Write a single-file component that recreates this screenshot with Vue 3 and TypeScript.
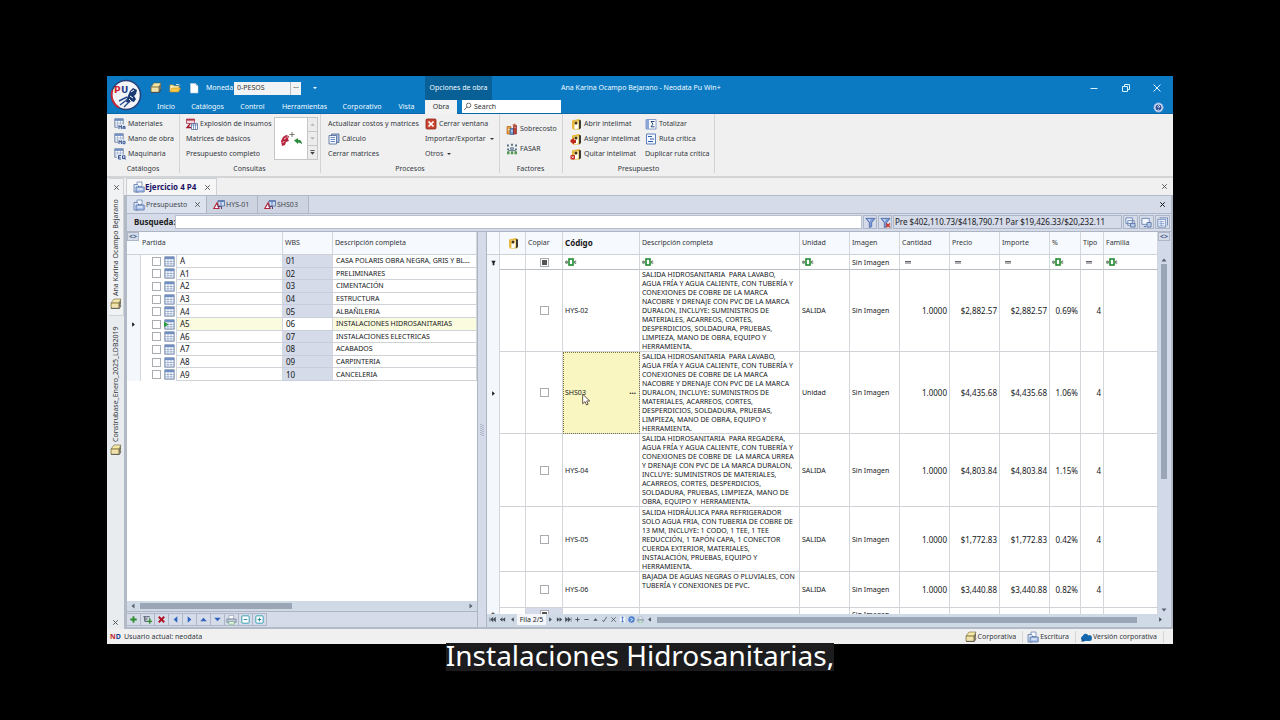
<script setup lang="ts">
import { ref } from 'vue'

interface Action { label: string; icon?: string; caret?: boolean }
interface Partida { code: string; wbs: string; name: string; current?: boolean }
interface Concepto {
  code: string; desc: string; unit: string; price: string; pct: string; size: string; current?: boolean
}

const menu = ['Inicio', 'Catálogos', 'Control', 'Herramientas', 'Corporativo', 'Vista']
const catalogos: Action[] = [
  { label: 'Materiales', icon: 'grid-ma' },
  { label: 'Mano de obra', icon: 'grid-mo' },
  { label: 'Maquinaria', icon: 'grid-eq' },
]
const consultas: Action[] = [
  { label: 'Explosión de insumos', icon: 'explode' },
  { label: 'Matrices de básicos' },
  { label: 'Presupuesto completo' },
]
const procesosA: Action[] = [
  { label: 'Actualizar costos y matrices' },
  { label: 'Cálculo', icon: 'calc' },
  { label: 'Cerrar matrices' },
]
const procesosB: Action[] = [
  { label: 'Cerrar ventana', icon: 'close-red' },
  { label: 'Importar/Exportar', caret: true },
  { label: 'Otros', caret: true },
]
const factores: Action[] = [
  { label: 'Sobrecosto', icon: 'factor' },
  { label: 'FASAR', icon: 'fasar' },
]
const presupuestoA: Action[] = [
  { label: 'Abrir intelimat', icon: 'mat-open' },
  { label: 'Asignar intelimat', icon: 'mat-assign' },
  { label: 'Quitar intelimat', icon: 'mat-remove' },
]
const presupuestoB: Action[] = [
  { label: 'Totalizar', icon: 'total' },
  { label: 'Ruta crítica', icon: 'route' },
  { label: 'Duplicar ruta crítica' },
]

const partidas: Partida[] = [
  { code: 'A', wbs: '01', name: 'CASA POLARIS OBRA NEGRA, GRIS Y BL…' },
  { code: 'A1', wbs: '02', name: 'PRELIMINARES' },
  { code: 'A2', wbs: '03', name: 'CIMENTACIÓN' },
  { code: 'A3', wbs: '04', name: 'ESTRUCTURA' },
  { code: 'A4', wbs: '05', name: 'ALBAÑILERIA' },
  { code: 'A5', wbs: '06', name: 'INSTALACIONES HIDROSANITARIAS', current: true },
  { code: 'A6', wbs: '07', name: 'INSTALACIONES ELECTRICAS' },
  { code: 'A7', wbs: '08', name: 'ACABADOS' },
  { code: 'A8', wbs: '09', name: 'CARPINTERIA' },
  { code: 'A9', wbs: '10', name: 'CANCELERIA' },
]

const lavabo = `SALIDA HIDROSANITARIA  PARA LAVABO,
AGUA FRÍA Y AGUA CALIENTE, CON TUBERÍA Y
CONEXIONES DE COBRE DE LA MARCA
NACOBRE Y DRENAJE CON PVC DE LA MARCA
DURALON, INCLUYE: SUMINISTROS DE
MATERIALES, ACARREOS, CORTES,
DESPERDICIOS, SOLDADURA, PRUEBAS,
LIMPIEZA, MANO DE OBRA, EQUIPO Y
HERRAMIENTA.`

const conceptos: Concepto[] = [
  { code: 'HYS-02', desc: lavabo, unit: 'SALIDA', price: '$2,882.57', pct: '0.69%', size: 'r82' },
  { code: 'SHS03', desc: lavabo, unit: 'Unidad', price: '$4,435.68', pct: '1.06%', size: 'r82', current: true },
  {
    code: 'HYS-04',
    desc: `SALIDA HIDROSANITARIA  PARA REGADERA,
AGUA FRÍA Y AGUA CALIENTE, CON TUBERÍA Y
CONEXIONES DE COBRE DE  LA MARCA URREA
Y DRENAJE CON PVC DE LA MARCA DURALON,
INCLUYE: SUMINISTROS DE MATERIALES,
ACARREOS, CORTES, DESPERDICIOS,
SOLDADURA, PRUEBAS, LIMPIEZA, MANO DE
OBRA, EQUIPO Y  HERRAMIENTA.`,
    unit: 'SALIDA', price: '$4,803.84', pct: '1.15%', size: 'r73',
  },
  {
    code: 'HYS-05',
    desc: `SALIDA HIDRÁULICA PARA REFRIGERADOR
SOLO AGUA FRIA, CON TUBERIA DE COBRE DE
13 MM, INCLUYE: 1 CODO, 1 TEE, 1 TEE
REDUCCIÓN, 1 TAPÓN CAPA, 1 CONECTOR
CUERDA EXTERIOR, MATERIALES,
INSTALACIÓN, PRUEBAS, EQUIPO Y
HERRAMIENTA.`,
    unit: 'SALIDA', price: '$1,772.83', pct: '0.42%', size: 'r65',
  },
  {
    code: 'HYS-06',
    desc: `BAJADA DE AGUAS NEGRAS O PLUVIALES, CON
TUBERÍA Y CONEXIONES DE PVC.`,
    unit: 'SALIDA', price: '$3,440.88', pct: '0.82%', size: 'r36',
  },
]

const treeTools = ['plus', 'plus-tree', 'delete', 'left', 'right', 'up', 'down', 'print', 'minus-box', 'plus-box']
const navBefore = ['nav-first', 'nav-back', 'mini-left']
const navAfter = ['mini-right', 'nav-fwd', 'nav-last', 'nav-add', 'nav-sub', 'mini-up', 'nav-ok', 'nav-no', 'nav-fit', 'nav-help', 'print', 'mini-left']
const search = ref('')
const busqueda = ref('')
const moneda = ref('0-PESOS')
</script>

<template>
  <svg class="defs" aria-hidden="true">
    <symbol id="box" viewBox="0 0 12 12">
      <path d="M1 5 4 1h7L9 5z" fill="#f6e9a8" stroke="#6d6340" stroke-width=".6" />
      <path d="M1 5h8v5H1z" fill="#e6cf7a" stroke="#6d6340" stroke-width=".6" />
      <path d="M9 5l2-4v5L9 10z" fill="#77725f" />
      <path d="M2 7h6M2 9h6" stroke="#fff" stroke-width=".8" />
      <path d="M1 10.500h8.500L11 7" fill="none" stroke="#4d4a3e" stroke-width=".8" />
    </symbol>
    <symbol id="folder" viewBox="0 0 12 12">
      <path d="M1 10V3h3l1 1h5v2" fill="#fff4c2" stroke="#d99b1c" stroke-width=".7" />
      <path d="M1 10 3 6h8.500L9.500 10z" fill="#f8c94c" stroke="#c88d14" stroke-width=".6" />
      <path d="M7 2.500h3l1 1" fill="none" stroke="#fff" stroke-width=".7" />
    </symbol>
    <symbol id="page" viewBox="0 0 12 12">
      <path d="M2.500 1.500h5l2.500 2.500v7h-7.500z" fill="#fff" stroke="#c5d2de" stroke-width=".5" />
      <path d="M7.500 1.500V4H10" fill="#b9c9d8" />
    </symbol>
    <symbol id="grid" viewBox="0 0 12 12">
      <rect x="1" y="1" width="10" height="10" fill="#fff" stroke="#5d7399" stroke-width="1" />
      <path d="M1 1h10v2.500H1z" fill="#6f8fc4" />
      <path d="M1 6h10M1 8.500h10M4.300 3v8M7.700 3v8" stroke="#8fa5cb" stroke-width=".8" />
    </symbol>
    <symbol id="grid-ma" viewBox="0 0 12 12">
      <use href="#grid" width="10" height="10" />
      <path d="M4 6.500h8V12H4z" fill="#e8ecf4" /><path d="M5 11V7.500l1.200 1.700 1.200-1.700V11M9 11V8.500h2V11M9 10h2" fill="none" stroke="#2b4a86" stroke-width=".9" />
    </symbol>
    <symbol id="grid-mo" viewBox="0 0 12 12">
      <use href="#grid" width="10" height="10" />
      <path d="M4 6.500h8V12H4z" fill="#e8ecf4" /><path d="M5 11V7.500l1.200 1.700 1.200-1.700V11M9 8.300h2v2.400H9z" fill="none" stroke="#2b4a86" stroke-width=".9" />
    </symbol>
    <symbol id="grid-eq" viewBox="0 0 12 12">
      <use href="#grid" width="10" height="10" />
      <path d="M3 6.500h9V12H3z" fill="#e8ecf4" /><path d="M7 7.500H4.500V11H7M4.500 9.200h2M8.500 7.800h2.500v2.800H8.500zM10 9.500l1.500 2" fill="none" stroke="#2b4a86" stroke-width=".9" />
    </symbol>
    <symbol id="explode" viewBox="0 0 12 12">
      <path d="M.5 1h8v4.500h-8z" fill="#f3d5dc" stroke="#b03a50" stroke-width=".8" />
      <path d="M.5 1.800h8M4 6 1 9.500h4" stroke="#a3142e" stroke-width="1.300" fill="none" />
      <path d="M5.500 5.500h6v6h-6z" fill="#fff" stroke="#53699a" stroke-width=".8" />
      <path d="M5.500 7h6M7.500 6v5M9.500 6v5" stroke="#6d86b8" stroke-width=".8" />
    </symbol>
    <symbol id="calc" viewBox="0 0 12 12">
      <path d="M3.500 1H11v8.500H3.500z" fill="#a8bbdc" stroke="#4c6594" stroke-width=".8" />
      <path d="M1 2.500h7.500V11H1z" fill="#f5f8fd" stroke="#4c6594" stroke-width=".8" />
      <path d="M2.500 4.500h4.500M2.500 6.500h4.500M2.500 8.500h4.500" stroke="#5b7cc0" stroke-width=".9" />
    </symbol>
    <symbol id="close-red" viewBox="0 0 12 12">
      <rect x="1" y="1" width="10" height="10" rx="1" fill="#c9452f" stroke="#8a2414" stroke-width=".8" />
      <path d="M3.500 3.500l5 5M8.500 3.500l-5 5" stroke="#fff" stroke-width="1.700" />
    </symbol>
    <symbol id="factor" viewBox="0 0 12 12">
      <path d="M1 3.500h4V11H1z" fill="#e8a13c" stroke="#a4541e" stroke-width=".6" />
      <path d="M4 5.500h4V11.500H4z" fill="#6b97d2" stroke="#34558c" stroke-width=".6" />
      <path d="M7.500 2.500h3V11h-3z" fill="#b7443a" stroke="#7a201c" stroke-width=".6" />
      <path d="M2 6.500h1.500M5 8h2M8.500 4.500h1" stroke="#fff" stroke-width=".8" />
      <path d="M6 2l3-1.500L10.500 3" fill="#c95a3a" />
    </symbol>
    <symbol id="fasar" viewBox="0 0 12 12">
      <path d="M1 1.500h2v2H1zM5 .8h2v2H5zM9 1.500h2v2H9zM1 5.500h2v1.500H1zM9 5.500h2v1.500H9z" fill="#5e7387" />
      <path d="M4 4h4v3H4z" fill="#8ba0ae" />
      <path d="M1 8.200h2.500v3H1zM4.800 8.200h2.500v3H4.800zM8.500 8.200H11v3H8.500z" fill="#4e9a55" />
      <path d="M2 7.500h8" stroke="#44566a" stroke-width=".7" />
    </symbol>
    <symbol id="mat-open" viewBox="0 0 12 12">
      <path d="M2 2.500 9 1l2 1.500V10L9 11.500H3L2 10z" fill="#e6b93a" />
      <path d="M4.500 3.500h4v7h-4z" fill="#fff8dc" /><circle cx="6" cy="5" r="1.500" fill="#463712" />
      <path d="M9 2v9.500L11 10V2.500z" fill="#3f3a30" /><path d="M5 7h3l-1 4H4.500z" fill="#fff" />
    </symbol>
    <symbol id="mat-assign" viewBox="0 0 12 12">
      <use href="#mat-open" /><path d="M.5 7 4 5v2h2v3H4v1.500L.5 9z" fill="#c2281e" />
    </symbol>
    <symbol id="mat-remove" viewBox="0 0 12 12">
      <use href="#mat-open" /><rect x=".5" y="7" width="4.500" height="4.500" rx="1" fill="#c2281e" /><path d="M1.700 8.200l2 2M3.700 8.200l-2 2" stroke="#fff" stroke-width=".8" />
    </symbol>
    <symbol id="total" viewBox="0 0 12 12">
      <path d="M1 1.500h10v9.500H1z" fill="#fff" stroke="#6a86bb" stroke-width=".8" />
      <path d="M1 1.500h3V11H1z" fill="#8aa6d8" /><path d="M9.500 3.500H6l2 2.700-2 2.600h3.500" fill="none" stroke="#28477f" stroke-width="1" />
    </symbol>
    <symbol id="route" viewBox="0 0 12 12">
      <path d="M1.500 1h9v10h-9z" fill="#f3f7fe" stroke="#5f80bd" stroke-width="1" />
      <path d="M3 3.500h4M5 6h4M3 8.500h5" stroke="#2f5caf" stroke-width="1" />
    </symbol>
    <symbol id="sheets" viewBox="0 0 12 12">
      <path d="M4 1h5v4.500H4z" fill="#f7fafd" stroke="#6c86b4" stroke-width=".8" />
      <path d="M1 3.500h4.500V11H1z" fill="#dce6f4" stroke="#5a76a9" stroke-width=".8" />
      <path d="M3 6h8.200v5H3z" fill="#a9c0e8" stroke="#4b689f" stroke-width=".7" />
      <path d="M4.500 8h5M5.500 2.500v2" stroke="#fff" stroke-width="1" />
    </symbol>
    <symbol id="matrix" viewBox="0 0 12 12">
      <path d="M5 1.500h6.500V7H5z" fill="#cfdcf2" stroke="#4d699f" stroke-width=".8" />
      <path d="M5 2.500h6.500M8 2v5" stroke="#6683b9" stroke-width="1" />
      <path d="M.8 9.500 4 4l2 5.500z" fill="#fff" stroke="#b3263e" stroke-width="1.200" /><path d="M4.500 7.500h4v2.500" stroke="#57437b" fill="none" stroke-width="1" />
    </symbol>
    <symbol id="grid-go" viewBox="0 0 12 12">
      <use href="#grid" /><path d="M0 3l5 3-5 3z" fill="#2d9a3b" />
    </symbol>
    <symbol id="funnel" viewBox="0 0 12 12">
      <path d="M1 1.500h10L7.300 6v4.500L4.700 11.500V6z" fill="#7f9edb" stroke="#3b5c9e" stroke-width=".8" /><path d="M3 2.500h3L5.500 5z" fill="#dbe6fa" />
    </symbol>
    <symbol id="funnel-x" viewBox="0 0 12 12">
      <use href="#funnel" /><path d="M6.500 7l4.500 4.300M11 7l-4.500 4.300" stroke="#cc3325" stroke-width="1.500" />
    </symbol>
    <symbol id="win-a" viewBox="0 0 12 12">
      <path d="M1 1h7v6H1zM3 4h7v5H3z" fill="#f4f8fd" stroke="#5c79ae" stroke-width=".9" /><path d="M6 7h5v4H6z" fill="#b6caea" stroke="#47659b" stroke-width=".8" />
    </symbol>
    <symbol id="win-b" viewBox="0 0 12 12">
      <path d="M1 1.500h8V8H1z" fill="#f4f8fd" stroke="#5c79ae" stroke-width=".9" /><path d="M6.500 6h4.500v5H6.500z" fill="#b6caea" stroke="#47659b" stroke-width=".8" /><path d="M3 10.500h2.500" stroke="#47659b" />
    </symbol>
    <symbol id="win-c" viewBox="0 0 12 12">
      <path d="M3 1h8.500v8M1 2.500h8.500V11H1z" fill="#f4f8fd" stroke="#5c79ae" stroke-width=".9" /><path d="M2.500 5h5.500M2.500 7h5.500M2.500 9h5.500M4.500 4v6" stroke="#6f8cc2" stroke-width=".7" />
    </symbol>
    <symbol id="abc" viewBox="0 0 12 8">
      <rect x="4" y="1" width="4" height="6" fill="#fff" stroke="#1e8a2e" stroke-width="1.600" />
      <path d="M.8 3.200h1.500v2H.8zM11.200 3.200H9.700v2h1.500" fill="none" stroke="#3c5c40" stroke-width=".9" />
    </symbol>
    <symbol id="equal" viewBox="0 0 12 8"><path d="M3 3.500h6M3 5h6" stroke="#50565e" stroke-width=".9" /></symbol>
    <symbol id="plus" viewBox="0 0 12 12"><path d="M6 2.500v7M2.500 6h7" stroke="#2e8b2e" stroke-width="2" /></symbol>
    <symbol id="plus-tree" viewBox="0 0 12 12"><path d="M1.500 3h7M3 3v5h3M3 5.500h3" fill="none" stroke="#3f4a5a" stroke-width="1" /><path d="M8.500 4.500v6M5.500 8h5.500" stroke="#2e8b2e" stroke-width="1.500" /></symbol>
    <symbol id="delete" viewBox="0 0 12 12"><path d="M3 3l6 6M9 3l-6 6" stroke="#b01020" stroke-width="2" /></symbol>
    <symbol id="left" viewBox="0 0 12 12"><path d="M8 2.500v7L4 6z" fill="#2d62c0" /></symbol>
    <symbol id="right" viewBox="0 0 12 12"><path d="M4 2.500v7L8 6z" fill="#2d62c0" /></symbol>
    <symbol id="up" viewBox="0 0 12 12"><path d="M2.500 8h7L6 4z" fill="#2d62c0" /></symbol>
    <symbol id="down" viewBox="0 0 12 12"><path d="M2.500 4h7L6 8z" fill="#2d62c0" /></symbol>
    <symbol id="print" viewBox="0 0 12 12"><path d="M3.500 1.500h5l-.5 4H3z" fill="#fff" stroke="#7d8ca4" stroke-width=".6" /><path d="M1 5.500h10v3.500H1z" fill="#c2ccdc" stroke="#5d6c86" stroke-width=".7" /><path d="M3 8.500h6V11H3z" fill="#fff" stroke="#49a34d" stroke-width=".6" /></symbol>
    <symbol id="minus-box" viewBox="0 0 12 12"><rect x="2" y="2" width="8" height="8" rx="1" fill="#fff" stroke="#2b98b0" /><path d="M4 6h4" stroke="#2b7c98" /></symbol>
    <symbol id="plus-box" viewBox="0 0 12 12"><rect x="2" y="2" width="8" height="8" rx="1" fill="#fff" stroke="#2b98b0" /><path d="M4 6h4M6 4v4" stroke="#2b7c98" /></symbol>
    <symbol id="cross" viewBox="0 0 12 12"><path d="M3 3l6 6M9 3l-6 6" stroke="currentColor" stroke-width="1.300" /></symbol>
    <symbol id="cloud" viewBox="0 0 12 12"><path d="M3 10a2.600 2.600 0 0 1-.3-5 3 3 0 0 1 5.600-.6A2.400 2.400 0 0 1 11.800 7 2.500 2.500 0 0 1 9.500 10z" fill="#1668ae" /><path d="M1 10.500 3 8l1.500 2.500z" fill="#0b4a86" /></symbol>
    <symbol id="mini-left" viewBox="0 0 8 8"><path d="M5.500 1.500v5L2.500 4z" fill="currentColor" /></symbol>
    <symbol id="mini-right" viewBox="0 0 8 8"><path d="M2.500 1.500v5l3-2.500z" fill="currentColor" /></symbol>
    <symbol id="mini-up" viewBox="0 0 8 8"><path d="M1.500 5.500h5L4 2.500z" fill="currentColor" /></symbol>
    <symbol id="mini-down" viewBox="0 0 8 8"><path d="M1.500 2.500h5L4 5.500z" fill="currentColor" /></symbol>
    <symbol id="nav-first" viewBox="0 0 8 8"><path d="M1 1.500v5M4.500 1.500v5L1.800 4zM7.500 1.500v5L4.800 4z" fill="currentColor" stroke="currentColor" stroke-width=".6" /></symbol>
    <symbol id="nav-back" viewBox="0 0 8 8"><path d="M4 1.500v5L1 4zM7 1.500v5L4 4z" fill="currentColor" /></symbol>
    <symbol id="nav-fwd" viewBox="0 0 8 8"><path d="M1 1.500v5L4 4zM4 1.500v5L7 4z" fill="currentColor" /></symbol>
    <symbol id="nav-last" viewBox="0 0 8 8"><path d="M7 1.500v5M3.500 1.500v5L6.200 4zM.5 1.500v5L3.200 4z" fill="currentColor" stroke="currentColor" stroke-width=".6" /></symbol>
    <symbol id="nav-add" viewBox="0 0 8 8"><path d="M4 1.500v5M1.500 4h5" stroke="currentColor" /></symbol>
    <symbol id="nav-sub" viewBox="0 0 8 8"><path d="M1.500 4h5" stroke="currentColor" /></symbol>
    <symbol id="nav-ok" viewBox="0 0 8 8"><path d="M1.500 4.500 3 6.500 6.500 1" fill="none" stroke="currentColor" stroke-width=".9" /></symbol>
    <symbol id="nav-no" viewBox="0 0 8 8"><path d="M1.500 1.500l5 5M6.500 1.500l-5 5" stroke="currentColor" stroke-width=".9" /></symbol>
    <symbol id="nav-fit" viewBox="0 0 8 8"><path d="M1 .5h6v7H1z" fill="#eef4fd" /><path d="M4 1v6M2.800 2.200 4 1l1.200 1.200M2.800 5.800 4 7l1.200-1.200" fill="none" stroke="#2f62b8" stroke-width=".9" /></symbol>
    <symbol id="nav-help" viewBox="0 0 8 8"><circle cx="4" cy="4" r="3.600" fill="#4a7fd0" /><path d="M2.500 2.500 5.500 4l-2.500 2" stroke="#fff" fill="none" stroke-width=".9" /></symbol>
  </svg>

  <div class="stage">
    <div class="window">
      <header class="titlebar">
        <svg class="logo" viewBox="0 0 32 32" aria-label="Neodata PU">
          <circle cx="16" cy="16" r="14.500" fill="#f2f4f7" stroke="#27407c" stroke-width="1.500" />
          <path d="M2.500 11A14.500 14.500 0 0 0 9 28.500" fill="none" stroke="#cc2b35" stroke-width="1.800" />
          <text x="4" y="14" class="logo-p">P</text>
          <text x="11" y="14" class="logo-u">U</text>
          <path d="M20 12l3-3 4 2-1 4-2 2 2 3-2 3-3-1-2 2-3-1 1-4z" fill="#1b3a73" />
          <path d="M21 13l3-2M20 17l3 2M19 20l2 2" stroke="#fff" stroke-width="1" />
          <path d="M17 18 9 22M18 20l-8 6M19 23l-5 5" stroke="#2b4b8c" stroke-width="1.400" />
        </svg>
        <div class="title-main">
          <div class="title-row">
            <div class="quick">
              <button aria-label="Obras"><svg><use href="#box" /></svg></button>
              <button aria-label="Abrir"><svg><use href="#folder" /></svg></button>
              <button aria-label="Nuevo"><svg><use href="#page" /></svg></button>
              <label for="moneda">Moneda</label>
              <span class="combo"><input id="moneda" v-model="moneda"><button aria-label="Elegir moneda">···</button></span>
              <button class="more" aria-label="Personalizar"><svg><use href="#mini-down" /></svg></button>
            </div>
            <div class="context">Opciones de obra</div>
            <h1>Ana Karina Ocampo Bejarano - Neodata Pu Win+</h1>
            <div class="winbtns">
              <button aria-label="Minimizar"><svg viewBox="0 0 12 12"><path d="M2.500 6.500h7" stroke="#d9f4ff" /></svg></button>
              <button aria-label="Restaurar"><svg viewBox="0 0 12 12"><path d="M2.500 4.500h5v5h-5zM4.500 4.500v-2h5v5h-2" fill="none" stroke="#d9f4ff" /></svg></button>
              <button aria-label="Cerrar"><svg viewBox="0 0 12 12"><path d="M2.500 2.500l7 7M9.500 2.500l-7 7" stroke="#d9f4ff" /></svg></button>
            </div>
          </div>
          <nav class="menu-row">
            <div class="menu"><button v-for="m in menu" :key="m">{{ m }}</button></div>
            <button class="active">Obra</button>
            <label class="search">
              <svg viewBox="0 0 12 12"><circle cx="7.500" cy="4.500" r="3" fill="none" stroke="#444" /><path d="M5.500 6.500 1.500 10.500" stroke="#444" /></svg>
              <input v-model="search" placeholder="Search" aria-label="Search">
            </label>
            <button class="help" aria-label="Ayuda"><svg viewBox="0 0 12 12"><circle cx="6" cy="6" r="5" fill="#dfe9fa" stroke="#8fb2e6" /><circle cx="6" cy="6" r="3.300" fill="#35549c" /><path d="M4.800 5q1.200-1.800 2.400-.4Q7 5.800 6 6.500M6 8v.6" stroke="#fff" fill="none" /></svg></button>
          </nav>
        </div>
      </header>

      <section class="ribbon">
        <div class="group g-cat">
          <div class="cols"><div class="col"><button v-for="a in catalogos" :key="a.label"><svg v-if="a.icon"><use :href="'#' + a.icon" /></svg>{{ a.label }}</button></div></div>
          <h2>Catálogos</h2>
        </div>
        <div class="group g-con">
          <div class="cols">
            <div class="col"><button v-for="a in consultas" :key="a.label"><svg v-if="a.icon"><use :href="'#' + a.icon" /></svg>{{ a.label }}</button></div>
            <div class="gallery">
              <button class="preview" aria-label="Consulta"><svg viewBox="0 0 24 16"><path d="M2 10l2-4 3-2 3 1-1 3 1 2-3 1-1 3-3 1z" fill="#b5243c" /><path d="M3.500 11.500l2-1M5 8l2-1M7.500 6h1.500" stroke="#fff" stroke-width=".8" /><path d="M13 1v5M10.500 3.500h5" stroke="#6c6660" stroke-width=".9" /><path d="M15 9.500l4-2.500v1.800q4 .2 4 4.700-1.200-2-4-2v1.500z" fill="#2d8b3c" /></svg></button>
              <div class="spin">
                <button disabled aria-label="Subir"><svg><use href="#mini-up" /></svg></button>
                <button disabled aria-label="Bajar"><svg><use href="#mini-down" /></svg></button>
                <button aria-label="Más"><svg viewBox="0 0 8 8"><path d="M1.500 1.800h5" stroke="#444" /><path d="M1.500 3.500h5L4 6.500z" fill="#444" /></svg></button>
              </div>
            </div>
          </div>
          <h2>Consultas</h2>
        </div>
        <div class="group g-pro">
          <div class="cols">
            <div class="col c-a"><button v-for="a in procesosA" :key="a.label"><svg v-if="a.icon"><use :href="'#' + a.icon" /></svg>{{ a.label }}</button></div>
            <div class="col"><button v-for="a in procesosB" :key="a.label"><svg v-if="a.icon"><use :href="'#' + a.icon" /></svg>{{ a.label }}<i v-if="a.caret" class="caret" /></button></div>
          </div>
          <h2>Procesos</h2>
        </div>
        <div class="group g-fac">
          <div class="cols"><div class="col tall"><button v-for="a in factores" :key="a.label"><svg v-if="a.icon"><use :href="'#' + a.icon" /></svg>{{ a.label }}</button></div></div>
          <h2>Factores</h2>
        </div>
        <div class="group g-pre">
          <div class="cols">
            <div class="col c-p"><button v-for="a in presupuestoA" :key="a.label"><svg v-if="a.icon"><use :href="'#' + a.icon" /></svg>{{ a.label }}</button></div>
            <div class="col"><button v-for="a in presupuestoB" :key="a.label"><svg v-if="a.icon"><use :href="'#' + a.icon" /></svg>{{ a.label }}</button></div>
          </div>
          <h2>Presupuesto</h2>
        </div>
      </section>

      <main class="work">
        <aside class="rail">
          <div class="rail-tab first">
            <button class="x" aria-label="Cerrar panel"><svg><use href="#cross" /></svg></button>
            <button class="vert">Ana Karina Ocampo Bejarano</button>
            <svg><use href="#box" /></svg>
          </div>
          <div class="rail-tab second">
            <button class="vert">Construbase_Enero_2025_LDB2019</button>
            <svg><use href="#box" /></svg>
          </div>
          <button class="x last" aria-label="Cerrar base"><svg><use href="#cross" /></svg></button>
        </aside>

        <div class="docs">
          <div class="doc-tabs">
            <div class="doc-tab"><svg><use href="#sheets" /></svg><button>Ejercicio 4 P4</button><button class="x" aria-label="Cerrar obra"><svg><use href="#cross" /></svg></button></div>
            <button class="x end" aria-label="Cerrar"><svg><use href="#cross" /></svg></button>
          </div>
          <div class="panel">
            <div class="sub-tabs">
              <div class="sub-tab on"><svg><use href="#sheets" /></svg><button>Presupuesto</button><button class="x" aria-label="Cerrar presupuesto"><svg><use href="#cross" /></svg></button></div>
              <div class="sub-tab"><svg><use href="#matrix" /></svg><button>HYS-01</button></div>
              <div class="sub-tab"><svg><use href="#matrix" /></svg><button>SHS03</button></div>
              <button class="x end dark" aria-label="Cerrar pestaña"><svg><use href="#cross" /></svg></button>
            </div>
            <div class="find">
              <label for="busqueda">Busqueda:</label>
              <input id="busqueda" v-model="busqueda">
              <button aria-label="Filtrar"><svg><use href="#funnel" /></svg></button>
              <button aria-label="Quitar filtro"><svg><use href="#funnel-x" /></svg></button>
              <output>Pre $402,110.73/$418,790.71 Par $19,426.33/$20,232.11</output>
              <button aria-label="Ventanas"><svg><use href="#win-a" /></svg></button>
              <button aria-label="Ventana"><svg><use href="#win-b" /></svg></button>
              <button aria-label="Lista"><svg><use href="#win-c" /></svg></button>
            </div>

            <div class="split">
              <section class="tree">
                <div class="tree-view">
                  <table>
                    <colgroup><col class="w14"><col class="w36"><col class="w106"><col class="w50"><col></colgroup>
                    <thead>
                      <tr><th class="corner"><button aria-label="Columnas">&lt;&gt;</button></th><th colspan="2" class="flush">Partida</th><th>WBS</th><th>Descripción completa</th></tr>
                    </thead>
                    <tbody>
                      <tr v-for="p in partidas" :key="p.code" :class="{ current: p.current }">
                        <td class="ind"><svg v-if="p.current"><use href="#mini-right" /></svg></td>
                        <td class="marks"><div><input type="checkbox" :aria-label="p.code"><svg><use :href="p.current ? '#grid-go' : '#grid'" /></svg></div></td>
                        <td class="cell fig">{{ p.code }}</td>
                        <td class="wbs fig">{{ p.wbs }}</td>
                        <td class="cell">{{ p.name }}</td>
                      </tr>
                    </tbody>
                  </table>
                </div>
                <div class="hscroll"><svg><use href="#mini-left" /></svg><div class="track"><i class="thumb" /></div><svg><use href="#mini-right" /></svg></div>
                <div class="tools"><button v-for="t in treeTools" :key="t" :aria-label="t"><svg><use :href="'#' + t" /></svg></button></div>
              </section>

              <div class="splitter">
                <svg viewBox="0 0 4 12"><path d="M1 0v12M3 1v11" stroke="#8b97aa" stroke-width="1" stroke-dasharray="1 1" /></svg>
              </div>

              <section class="items">
                <div class="items-body">
                  <div class="items-view">
                    <table>
                      <colgroup>
                        <col class="w13"><col class="w26"><col class="w37"><col class="w77"><col class="w160"><col class="w50"><col class="w50">
                        <col class="w50"><col class="w50"><col class="w50"><col class="w31"><col class="w23"><col>
                      </colgroup>
                      <thead>
                        <tr>
                          <th /><th class="mid"><svg><use href="#mat-open" /></svg></th><th>Copiar</th><th class="strong">Código</th><th>Descripción completa</th><th>Unidad</th>
                          <th>Imagen</th><th>Cantidad</th><th>Precio</th><th>Importe</th><th>%</th><th>Tipo</th><th>Familia</th>
                        </tr>
                      </thead>
                      <tbody>
                        <tr class="filter">
                          <td class="ind"><svg viewBox="0 0 8 8"><path d="M1.500 2h5L5 4.500V7H3V4.500z" fill="#222" /></svg></td><td />
                          <td class="mid"><input type="checkbox" class="mixed" aria-label="Filtrar copiar"></td>
                          <td><svg><use href="#abc" /></svg></td><td><svg><use href="#abc" /></svg></td><td><svg><use href="#abc" /></svg></td>
                          <td>Sin Imagen</td><td><svg><use href="#equal" /></svg></td><td><svg><use href="#equal" /></svg></td><td><svg><use href="#equal" /></svg></td>
                          <td><svg><use href="#abc" /></svg></td><td><svg><use href="#equal" /></svg></td><td><svg><use href="#abc" /></svg></td>
                        </tr>
                        <tr v-for="c in conceptos" :key="c.code" :class="c.size">
                          <td class="ind"><svg v-if="c.current"><use href="#mini-right" /></svg></td><td />
                          <td class="mid"><input type="checkbox" :aria-label="'Copiar ' + c.code"></td>
                          <td :class="{ focus: c.current }">
                            <div class="code"><span>{{ c.code }}</span><button v-if="c.current" aria-label="Editar código">···</button></div>
                            <svg v-if="c.current" class="cursor" viewBox="0 0 12 16"><path d="M2 1v11.500l2.800-2.500 1.800 4 2-1-1.800-3.800h3.700z" fill="#fff" stroke="#4a3a2c" /></svg>
                          </td>
                          <td class="desc">{{ c.desc }}</td><td>{{ c.unit }}</td><td>Sin Imagen</td>
                          <td class="num">1.0000</td><td class="num">{{ c.price }}</td><td class="num">{{ c.price }}</td><td class="num">{{ c.pct }}</td><td class="num">4</td><td />
                        </tr>
                        <tr class="new">
                          <td class="ind">*</td><td /><td class="mid shade"><input type="checkbox" class="mixed" aria-label="Copiar nuevo"></td><td /><td /><td /><td>Sin Imagen</td><td /><td /><td /><td /><td /><td />
                        </tr>
                      </tbody>
                    </table>
                  </div>
                  <div class="vscroll">
                    <button aria-label="Columnas">&lt;&gt;</button>
                    <svg><use href="#mini-up" /></svg><div class="vtrack"><i /></div><svg><use href="#mini-down" /></svg>
                  </div>
                </div>
                <div class="navigator">
                  <button v-for="n in navBefore" :key="n" :aria-label="n"><svg><use :href="'#' + n" /></svg></button>
                  <span>Fila 2/5</span>
                  <button v-for="n in navAfter" :key="n" class="narrow" :aria-label="n"><svg><use :href="'#' + n" /></svg></button>
                  <div class="track"><i /></div>
                  <button class="go" aria-label="Desplazar"><svg><use href="#mini-right" /></svg></button>
                </div>
              </section>
            </div>
          </div>
        </div>
      </main>

      <footer class="status">
        <b class="nd"><i>N</i>D</b><span class="user">Usuario actual: neodata</span>
        <span class="s"><svg><use href="#box" /></svg>Corporativa</span>
        <span class="s"><svg><use href="#sheets" /></svg>Escritura</span>
        <span class="s"><svg><use href="#cloud" /></svg>Versión corporativa</span>
      </footer>
    </div>
    <p class="caption"><span>Instalaciones Hidrosanitarias,</span></p>
  </div>
</template>

<style>
html, body { background: #000; }
</style>

<style scoped>
* { box-sizing: border-box; }
.defs { position: absolute; width: 0; height: 0; }
.stage { position: relative; height: 100vh; min-height: 720px; padding: 76px 107px; background: #000; font: 7px/12px "Noto Sans", Tahoma, sans-serif; color: #24282e; }
button { font: inherit; color: inherit; background: none; border: 0; padding: 0; margin: 0; display: inline-flex; align-items: center; justify-content: center; white-space: nowrap; }
input { font: inherit; color: inherit; border: 0; border-radius: 0; padding: 0; margin: 0; min-width: 0; outline: 0; }
h1, h2, p { margin: 0; font-size: inherit; font-weight: normal; }
svg { width: 12px; height: 12px; flex: none; display: block; }
.window { height: 100%; display: flex; flex-direction: column; background: #f0f0f0; overflow: hidden; }

.titlebar { display: flex; height: 38px; flex: none; background: #0b7ac3; color: #f2fbff; border-bottom: 1px solid #0a68a8; }
.logo { width: 32px; height: 32px; margin: 3px 7px 0 3px; }
.logo-p, .logo-u { font: bold 9px "DejaVu Sans", sans-serif; fill: #d0202c; }
.logo-u { fill: #1c3f86; }
.title-main { flex: 1; min-width: 0; }
.title-row { display: flex; height: 24px; align-items: stretch; }
.quick { width: 276px; display: flex; align-items: center; }
.quick > button { width: 19px; height: 12px; }
.quick > button:first-child { width: 13px; margin-right: 3px; }
.quick label { margin: 0 0 0 3px; width: 28px; white-space: nowrap; }
.combo { display: flex; height: 13px; width: 67px; background: #f1f3f4; color: #333; }
.combo input { flex: 1; background: none; padding-left: 3px; }
.combo button { width: 11px; border-left: 1px solid #b7bcc2; }
.quick .more { margin-left: 4px; }
.more svg { width: 6px; height: 6px; }
.context { width: 67px; display: flex; align-items: center; justify-content: center; background: #096096; white-space: nowrap; }
h1 { flex: 1; padding-left: 69px; align-self: center; white-space: nowrap; }
.winbtns { display: flex; width: 95px; }
.winbtns button { width: 32px; }
.menu-row { display: flex; height: 14px; }
.menu { display: grid; grid-template-columns: 34px 49px 41px 63px 52px 37px; }
.menu-row .active { width: 32px; background: #f3f3f3; color: #333; margin-right: 5px; }
.search { display: flex; align-items: center; width: 99px; height: 13px; background: #fff; color: #333; padding-left: 1px; }
.search svg { width: 9px; height: 9px; margin-right: 2px; }
.search input { width: 80px; background: none; }
.search input::placeholder { color: #333; opacity: 1; }
.help { margin-left: auto; margin-right: 9px; }
.help svg { width: 11px; height: 11px; }

.ribbon { display: flex; height: 64px; flex: none; background: #f0f0f0; border-bottom: 2px solid #d2d4d6; color: #34393f; }
.group { border-right: 1px solid #d4d4d4; padding: 3px 0 0 7px; margin-bottom: 3px; }
.group h2 { text-align: center; padding-right: 7px; line-height: 15px; }
.cols { display: flex; height: 44px; }
.col { display: flex; flex-direction: column; justify-content: space-between; }
.col button { height: 14px; justify-content: flex-start; }
.col svg { margin-right: 2px; }
.col.tall { justify-content: center; gap: 6px; }
.g-cat { width: 73px; } .g-con { width: 141px; padding-left: 6px; } .g-pro { width: 179px; } .g-fac { width: 63px; padding-left: 6px; } .g-pre { width: 152px; }
.g-con .col { width: 88px; }
.c-a { width: 97px; } .c-p { width: 75px; }
.caret { width: 0; height: 0; margin-left: 4px; border: 2px solid transparent; border-top-color: #333; border-bottom: 0; }
.gallery { display: flex; height: 43px; width: 44px; border: 1px solid #c4c6c8; }
.preview { flex: 1; background: #fff; }
.preview svg { width: 24px; height: 16px; }
.spin { width: 10px; display: flex; flex-direction: column; border-left: 1px solid #c4c6c8; background: #ececec; color: #777; }
.spin button { flex: 1; }
.spin button + button { border-top: 1px solid #c4c6c8; }
.spin button:disabled { color: #b2b5b8; }
.spin svg { width: 7px; height: 7px; }

.work { flex: 1; display: flex; min-height: 0; }
.rail { width: 17px; display: flex; flex-direction: column; background: #e8ecee; }
.rail-tab { display: flex; flex-direction: column; align-items: center; margin-left: 2px; border: 1px solid #d0d4d6; border-left: 0; background: #f1f2f3; }
.rail-tab.first { height: 138px; padding-top: 2px; }
.rail-tab.second { height: 141px; padding-top: 6px; background: none; border-color: transparent; }
.vert { writing-mode: vertical-rl; transform: rotate(180deg); width: 12px; justify-content: flex-start; color: #33383e; }
.first .vert { margin: 4px 0 2px; height: 98px; }
.second .vert { height: 119px; margin-bottom: 2px; }
.x { width: 13px; height: 13px; flex: none; color: #555; }
.x svg { width: 9px; height: 9px; }
.x.end { margin-left: auto; margin-right: 2px; }
.x.dark { color: #111; }
.x.last { margin-top: auto; margin-left: 2px; }

.docs { flex: 1; display: flex; flex-direction: column; min-width: 0; }
.doc-tabs { height: 17px; display: flex; align-items: center; background: #f0f0f0; }
.doc-tab { display: flex; align-items: center; width: 91px; height: 17px; margin-left: 2px; padding-left: 6px; border: 1px solid #cdd1d6; border-bottom: 0; background: #f6f6f6; font-size: 8px; font-weight: bold; color: #1b1464; }
.doc-tab .x { margin-left: auto; margin-right: 2px; }
.panel { flex: 1; display: flex; flex-direction: column; min-height: 0; background: #d5dbe8; border: solid #b2bac6; border-width: 1px 2px 2px 3px; }
.sub-tabs { display: flex; height: 18px; align-items: stretch; border-bottom: 1px solid #aeb8c8; }
.sub-tab { display: flex; align-items: center; gap: 1px; padding-left: 6px; width: 47px; border-right: 1px solid #aeb6c4; background: #cdd3e0; color: #43484f; }
.sub-tab + .sub-tab { width: 51px; }
.sub-tab.on { width: 80px; background: #dde3ee; }
.sub-tab.on .x { margin-left: auto; margin-right: 2px; }
.sub-tabs .end { align-self: center; }
.find { display: flex; height: 17px; padding: 1px 1px 2px 7px; align-items: center; gap: 1px; }
.find label { width: 40px; font-size: 8px; font-weight: bold; color: #1d1d22; white-space: nowrap; }
.find input { flex: 1; height: 14px; background: #fff; border: 1px solid #b8c0cd; }
.find button { width: 14px; height: 14px; border: 1px solid #adb7c8; }
.find button svg { width: 11px; height: 11px; }
.find output { width: 229px; height: 14px; padding-left: 1px; font-size: 8px; line-height: 12px; border: 1px solid #adb7c8; color: #17191d; white-space: nowrap; }
.find output ~ button { width: 15px; }

.split { flex: 1; display: flex; min-height: 0; border-top: 1px solid #adb5c3; }
.tree { width: 351px; display: flex; flex-direction: column; min-height: 0; border-right: 1px solid #adb5c3; }
.tree-view { flex: 1; background: #fff; min-height: 0; overflow: hidden; }
table { border-collapse: separate; border-spacing: 0; table-layout: fixed; width: 100%; color: #14161a; }
.tree table { height: 149px; }
.w13 { width: 13px; } .w14 { width: 14px; } .w23 { width: 23px; } .w26 { width: 26px; } .w31 { width: 31px; } .w36 { width: 36px; } .w37 { width: 37px; }
.w50 { width: 50px; } .w77 { width: 77px; } .w106 { width: 106px; } .w160 { width: 160px; }
th, td { padding: 0 2px; text-align: left; font-weight: normal; border-right: 1px solid #d3d6da; border-bottom: 1px solid #cfd3d7; overflow: hidden; white-space: nowrap; line-height: 9px; }
th { height: 23px; background: #f6f9fd; color: #30343a; padding-bottom: 1px; }
th.strong { font-size: 8px; font-weight: bold; color: #14161a; }
th.flush { padding-left: 1px; }
th.corner { padding: 0; vertical-align: top; border-right: 0; }
.corner button, .vscroll button { width: 12px; height: 9px; font-size: 7px; font-weight: bold; line-height: 7px; color: #34507e; background: #d5dbe8; border: 1px solid #adb7c8; }
.tree td { padding-left: 3px; }
.tree td.marks, .tree td.ind { border-bottom: 0; padding: 0; }
td.ind { background: #f4f7fb; padding: 0; color: #111; text-align: center; }
td.ind svg { width: 7px; height: 7px; margin: 0 auto; }
.marks div { display: flex; align-items: center; justify-content: flex-end; gap: 3px; padding-right: 1px; }
.marks svg { width: 11px; height: 11px; }
input[type="checkbox"] { appearance: none; display: block; width: 9px; height: 9px; border: 1px solid #a9adb2; background: #fff; flex: none; }
input.mixed { background: linear-gradient(#555, #555) center / 5px 5px no-repeat #fff; }
td.fig { font-size: 8px; }
.tree td.wbs { background: #d5dbe8; border-bottom-color: #c8cedb; }
.current td.cell { background: #fbfbdf; }
.tree .current td.wbs { background: #fff; }

.hscroll { height: 11px; display: flex; align-items: center; background: #d0d9e6; color: #59616f; border-bottom: 1px solid #adb5c3; padding: 0 2px; }
.hscroll svg { width: 8px; height: 8px; }
.track { flex: 1; height: 6px; padding: 0 3px; display: flex; }
.track i { background: #9aa5b5; width: 47%; height: 6px; }
.tools { display: flex; height: 15px; padding-top: 1px; }
.tools button { width: 14px; height: 13px; border: 1px solid #adb7c8; border-left-width: 0; }
.tools svg { width: 11px; height: 11px; }

.splitter { width: 8px; display: flex; align-items: center; justify-content: center; }
.splitter svg { width: 4px; height: 12px; }

.items { flex: 1; display: flex; flex-direction: column; min-width: 0; min-height: 0; border-left: 1px solid #adb5c3; margin-right: 1px; }
.items-body { flex: 1; display: flex; min-height: 0; }
.items-view { flex: 1; min-width: 0; overflow: hidden; background: #fff; }
.items td { padding: 0 3px 0 2px; }
.items td.ind, .items td.mid, th.mid { padding: 0; }
.items td.ind { border-bottom: 0; }
th.mid svg, .mid input { margin: 0 auto; }
.filter td { height: 15px; border-bottom-color: #b9bec5; }
.filter svg { width: 12px; height: 8px; }
.r82 td { height: 82px; } .r73 td { height: 73px; } .r65 td { height: 65px; } .r36 td { height: 36px; }
.new td { height: 13px; line-height: 11px; }
.shade { background: #d5dbe8; }
td.desc { white-space: pre; line-height: 9px; }
.r36 td.desc { vertical-align: top; }
.items td.num { text-align: right; padding-right: 2px; font-size: 8px; }
td.focus { background: #f9f6c2; outline: 1px dotted #77733f; outline-offset: -1px; position: relative; }
.code { display: flex; justify-content: space-between; }
.code button { height: 9px; font-size: 8px; font-weight: bold; }
.cursor { position: absolute; left: 18px; top: 41px; width: 10px; height: 14px; }
.vscroll { width: 12px; display: flex; flex-direction: column; align-items: center; background: #d2daea; color: #59616f; }
.vscroll button { width: 12px; margin-bottom: 15px; }
.vscroll svg { width: 8px; height: 8px; }
.vtrack { flex: 1; width: 6px; }
.vtrack i { display: block; width: 6px; height: 63%; background: #9aa5b5; }
.navigator { display: flex; height: 13px; align-items: center; background: #d0d9e6; color: #3f4855; padding-bottom: 2px; }
.navigator button { width: 10px; height: 11px; flex: none; }
.navigator button.narrow { width: 9px; }
.navigator button.go { width: 20px; }
.navigator button svg { width: 7px; height: 7px; }
.navigator span { width: 29px; height: 11px; line-height: 11px; background: #f4f6f9; text-align: center; color: #222; white-space: nowrap; flex: none; }
.navigator .track i { width: 98%; }

.status { display: flex; height: 15px; flex: none; align-items: center; background: #f0f0f0; color: #34383e; }
.nd { width: 17px; padding-left: 3px; color: #1d3f8c; }
.nd i { color: #c01f2d; font-style: normal; }
.user { flex: 1; }
.s { display: flex; align-items: center; gap: 1px; padding: 0 6px 0 4px; height: 12px; border-right: 1px solid #d4d6d8; white-space: nowrap; }
.s:last-child { margin-right: 9px; }

.caption { position: absolute; left: 0; right: 0; top: 643px; text-align: center; color: #fff; font-size: 28px; line-height: 25px; }
.caption span { display: inline-block; padding-bottom: 3px; background: #1c1c1e; white-space: nowrap; }
</style>
